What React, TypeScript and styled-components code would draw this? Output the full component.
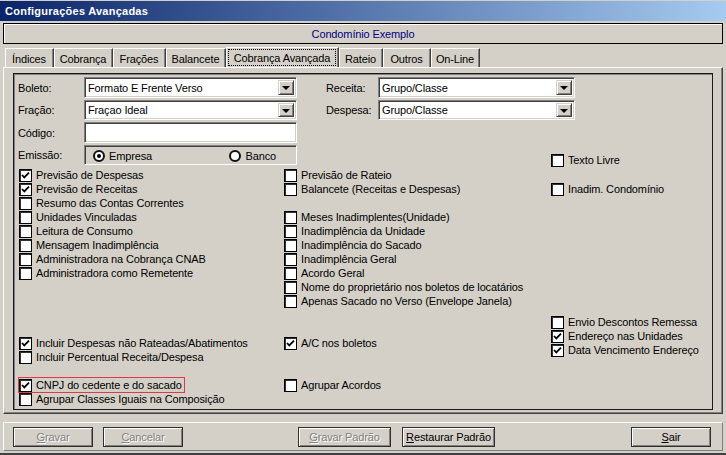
import React from 'react';
import styled, { createGlobalStyle } from 'styled-components';

const GlobalStyle = createGlobalStyle`
  html, body {
    margin: 0;
    padding: 0;
    background: #d4d0c8;
  }
  body {
    font-family: "Liberation Sans", Arial, sans-serif;
    font-size: 11px;
    letter-spacing: -0.13px;
    color: #000;
  }
`;

const Window = styled.div`
  width: 726px;
  height: 455px;
  box-sizing: border-box;
  background: #d4d0c8;
  padding-top: 1px;
  border-bottom: 2px solid #404040;
  display: flex;
  flex-direction: column;
`;

const TitleBar = styled.div`
  height: 20px;
  padding-left: 5px;
  display: flex;
  align-items: center;
  background: linear-gradient(to right, #0a246a, #a6caf0);
  color: #fff;
  font-weight: bold;
  font-size: 11px;
  letter-spacing: 0.25px;
`;

const Body = styled.div`
  padding: 0 3px;
  display: flex;
  flex-direction: column;
`;

const HeaderBox = styled.div`
  margin-top: 2px;
  height: 21px;
  box-sizing: border-box;
  border: 1px solid #000;
  box-shadow: inset 1px 1px 0 #fff;
  display: flex;
  align-items: center;
  justify-content: center;
  color: #000080;
`;

const TabStrip = styled.div`
  margin-top: 3px;
  height: 20px;
  padding-left: 2px;
  display: flex;
  align-items: flex-end;
`;

const Tab = styled.div<{ $w: number; $active?: boolean }>`
  width: ${(p) => p.$w}px;
  height: ${(p) => (p.$active ? 20 : 19)}px;
  box-sizing: border-box;
  border-left: 1px solid #fff;
  border-top: 1px solid #fff;
  border-right: 1px solid #404040;
  box-shadow: inset -1px 0 0 #808080;
  display: flex;
  align-items: center;
  justify-content: center;
  padding: 1px 2px 0 1px;
`;

const FocusText = styled.span`
  flex: 1;
  align-self: stretch;
  display: flex;
  align-items: center;
  justify-content: center;
  outline: 1px dotted #000;
  outline-offset: -1px;
  margin-bottom: 1px;
`;

const TabPage = styled.div`
  height: 347px;
  box-sizing: border-box;
  border-top: 1px solid #fff;
  border-left: 1px solid #fff;
  border-right: 1px solid #404040;
  border-bottom: 1px solid #404040;
  box-shadow: inset -1px -1px 0 #808080;
  padding: 5px 9px 3px 9px;
`;

const InnerPanel = styled.div`
  width: 700px;
  height: 337px;
  box-sizing: border-box;
  border: 1px solid #1a1a1a;
  box-shadow: inset 1px 1px 0 #808080;
  padding: 3px 0 0 4px;
`;

const FormGrid = styled.div`
  display: grid;
  grid-template-columns: 66px 213px 29px 52px 197px 1fr;
  grid-template-rows: 21px 20px 21px 20px;
  row-gap: 2px;
`;

const Label = styled.div<{ $col: number; $row: number }>`
  grid-column: ${(p) => p.$col};
  grid-row: ${(p) => p.$row};
  align-self: center;
`;

const Field = styled.div<{ $col: number; $row: number }>`
  grid-column: ${(p) => p.$col};
  grid-row: ${(p) => p.$row};
  box-sizing: border-box;
  background: #fff;
  border-top: 1px solid #808080;
  border-left: 1px solid #808080;
  border-bottom: 1px solid #fff;
  border-right: 1px solid #fff;
  box-shadow: inset 1px 1px 0 #404040, inset -1px -1px 0 #d4d0c8;
  display: flex;
  align-items: center;
  padding: 2px 2px 2px 3px;
`;

const FieldText = styled.span`
  flex: 1;
`;

const DropButton = styled.div`
  width: 16px;
  align-self: stretch;
  box-sizing: border-box;
  background: #d4d0c8;
  border-top: 1px solid #d4d0c8;
  border-left: 1px solid #d4d0c8;
  border-bottom: 1px solid #404040;
  border-right: 1px solid #404040;
  box-shadow: inset 1px 1px 0 #fff, inset -1px -1px 0 #808080;
  display: flex;
  align-items: center;
  justify-content: center;

  &::after {
    content: '';
    border-left: 4px solid transparent;
    border-right: 4px solid transparent;
    border-top: 4px solid #000;
    margin-top: 1px;
  }
`;

const RadioGroup = styled.div`
  grid-column: 2;
  grid-row: 4;
  box-sizing: border-box;
  border-top: 1px solid #808080;
  border-left: 1px solid #808080;
  border-bottom: 1px solid #fff;
  border-right: 1px solid #fff;
  box-shadow: inset 1px 1px 0 #404040;
  display: flex;
  align-items: center;
  justify-content: space-between;
  padding: 1px 20px 0 8px;
`;

const RadioItem = styled.label`
  display: flex;
  align-items: center;
  gap: 4px;
`;

const RadioDot = styled.span<{ $on?: boolean }>`
  width: 12px;
  height: 12px;
  box-sizing: border-box;
  border-radius: 50%;
  border: 2px solid #111;
  background: #fff;
  display: flex;
  align-items: center;
  justify-content: center;

  &::after {
    content: '';
    width: 4px;
    height: 4px;
    border-radius: 50%;
    background: ${(p) => (p.$on ? '#000' : 'transparent')};
  }
`;

const SideCheck = styled.div`
  grid-column: 5 / 7;
  grid-row: 4;
  align-self: end;
  margin: 0 0 -2px 173px;
`;

const CheckGrid = styled.div`
  margin-top: 3px;
  padding-left: 1px;
  display: grid;
  grid-template-columns: 265px 267px 1fr;
  grid-template-rows: repeat(17, 14px);
`;

const CheckItem = styled.div<{ $marked?: boolean }>`
  display: flex;
  align-items: center;
  gap: 4px;
  height: 14px;
  white-space: nowrap;
  padding-right: ${(p) => (p.$marked ? 2 : 0)}px;
  outline: ${(p) => (p.$marked ? '1px solid #dc3a44' : 'none')};
`;

const Cell = styled.div<{ $col: number; $row: string }>`
  grid-column: ${(p) => p.$col};
  grid-row: ${(p) => p.$row};
  display: flex;
  flex-direction: column;
  justify-content: center;
  align-items: flex-start;
`;

const Box = styled.span`
  width: 13px;
  height: 13px;
  flex: none;
  box-sizing: border-box;
  background: #fff;
  border: 1px solid #000;
  box-shadow: inset 1px 1px 0 #333;
  display: flex;
  align-items: center;
  justify-content: center;
`;

const ButtonBar = styled.div`
  margin-top: 8px;
  height: 29px;
  box-sizing: border-box;
  border-top: 1px solid #fff;
  border-left: 1px solid #fff;
  border-bottom: 1px solid #808080;
  border-right: 1px solid #808080;
  display: flex;
  align-items: flex-start;
  padding: 4px 11px 0 8px;
`;

const Button = styled.div<{ $w: number; $disabled?: boolean; $gap?: number }>`
  width: ${(p) => p.$w}px;
  height: 20px;
  margin-left: ${(p) => p.$gap ?? 0}px;
  box-sizing: border-box;
  border: 1px solid #303030;
  box-shadow: inset 1px 1px 0 #fff, inset -1px -1px 0 #808080;
  display: flex;
  align-items: center;
  justify-content: center;
  color: ${(p) => (p.$disabled ? '#808080' : '#000')};
  text-shadow: ${(p) => (p.$disabled ? '1px 1px 0 #fff' : 'none')};
`;

const Spacer = styled.div`
  flex: 1;
`;

const Check = ({ on }: { on?: boolean }) => (
  <Box>
    {on && (
      <svg width="9" height="9" viewBox="0 0 9 9">
        <path d="M1 4 L3.3 6.4 L8 1.6" fill="none" stroke="#000" strokeWidth="1.8" />
      </svg>
    )}
  </Box>
);

interface Opt {
  text: string;
  on?: boolean;
  marked?: boolean;
}

const CheckOption = ({ text, on, marked }: Opt) => (
  <CheckItem $marked={marked}>
    <Check on={on} />
    <span>{text}</span>
  </CheckItem>
);

// [coluna, linha, item]
const checks: [number, number, Opt][] = [
  [1, 1, { text: 'Previsão de Despesas', on: true }],
  [1, 2, { text: 'Previsão de Receitas', on: true }],
  [1, 3, { text: 'Resumo das Contas Correntes' }],
  [1, 4, { text: 'Unidades Vinculadas' }],
  [1, 5, { text: 'Leitura de Consumo' }],
  [1, 6, { text: 'Mensagem Inadimplência' }],
  [1, 7, { text: 'Administradora na Cobrança CNAB' }],
  [1, 8, { text: 'Administradora como Remetente' }],
  [1, 13, { text: 'Incluir Despesas não Rateadas/Abatimentos', on: true }],
  [1, 14, { text: 'Incluir Percentual Receita/Despesa' }],
  [1, 16, { text: 'CNPJ do cedente e do sacado', on: true, marked: true }],
  [1, 17, { text: 'Agrupar Classes Iguais na Composição' }],
  [2, 1, { text: 'Previsão de Rateio' }],
  [2, 2, { text: 'Balancete (Receitas e Despesas)' }],
  [2, 4, { text: 'Meses Inadimplentes(Unidade)' }],
  [2, 5, { text: 'Inadimplência da Unidade' }],
  [2, 6, { text: 'Inadimplência do Sacado' }],
  [2, 7, { text: 'Inadimplência Geral' }],
  [2, 8, { text: 'Acordo Geral' }],
  [2, 9, { text: 'Nome do proprietário nos boletos de locatários' }],
  [2, 10, { text: 'Apenas Sacado no Verso (Envelope Janela)' }],
  [2, 13, { text: 'A/C nos boletos', on: true }],
  [2, 16, { text: 'Agrupar Acordos' }],
  [3, 2, { text: 'Inadim. Condomínio' }],
];

const remessa: Opt[] = [
  { text: 'Envio Descontos Remessa' },
  { text: 'Endereço nas Unidades', on: true },
  { text: 'Data Vencimento Endereço', on: true },
];

const tabs = [
  { label: 'Índices', w: 49 },
  { label: 'Cobrança', w: 59 },
  { label: 'Frações', w: 53 },
  { label: 'Balancete', w: 60 },
  { label: 'Cobrança Avançada', w: 113, active: true },
  { label: 'Rateio', w: 44 },
  { label: 'Outros', w: 48 },
  { label: 'On-Line', w: 49 },
];

export default function App() {
  return (
    <>
      <GlobalStyle />
      <Window>
        <TitleBar>Configurações Avançadas</TitleBar>
        <Body>
          <HeaderBox>Condomínio Exemplo</HeaderBox>
          <TabStrip>
            {tabs.map((t) => (
              <Tab key={t.label} $w={t.w} $active={t.active}>
                {t.active ? <FocusText>{t.label}</FocusText> : t.label}
              </Tab>
            ))}
          </TabStrip>
          <TabPage>
            <InnerPanel>
              <FormGrid>
                <Label $col={1} $row={1}>Boleto:</Label>
                <Field $col={2} $row={1}>
                  <FieldText>Formato E Frente Verso</FieldText>
                  <DropButton />
                </Field>
                <Label $col={4} $row={1}>Receita:</Label>
                <Field $col={5} $row={1}>
                  <FieldText>Grupo/Classe</FieldText>
                  <DropButton />
                </Field>
                <Label $col={1} $row={2}>Fração:</Label>
                <Field $col={2} $row={2}>
                  <FieldText>Fraçao Ideal</FieldText>
                  <DropButton />
                </Field>
                <Label $col={4} $row={2}>Despesa:</Label>
                <Field $col={5} $row={2}>
                  <FieldText>Grupo/Classe</FieldText>
                  <DropButton />
                </Field>
                <Label $col={1} $row={3}>Código:</Label>
                <Field $col={2} $row={3} />
                <Label $col={1} $row={4}>Emissão:</Label>
                <RadioGroup>
                  <RadioItem>
                    <RadioDot $on />
                    Empresa
                  </RadioItem>
                  <RadioItem>
                    <RadioDot />
                    Banco
                  </RadioItem>
                </RadioGroup>
                <SideCheck>
                  <CheckOption text="Texto Livre" />
                </SideCheck>
              </FormGrid>
              <CheckGrid>
                {checks.map(([col, row, o]) => (
                  <Cell key={o.text} $col={col} $row={String(row)}>
                    <CheckOption {...o} />
                  </Cell>
                ))}
                <Cell $col={3} $row="11 / 15">
                  {remessa.map((o) => (
                    <CheckOption key={o.text} {...o} />
                  ))}
                </Cell>
              </CheckGrid>
            </InnerPanel>
          </TabPage>
          <ButtonBar>
            <Button $w={80} $disabled $gap={1}>
              <u>G</u>ravar
            </Button>
            <Button $w={80} $disabled $gap={10}>
              <u>C</u>ancelar
            </Button>
            <Button $w={93} $disabled $gap={115}>
              <u>G</u>ravar Padrão
            </Button>
            <Button $w={93} $gap={11}>
              <u>R</u>estaurar Padrão
            </Button>
            <Spacer />
            <Button $w={80}>
              <u>S</u>air
            </Button>
          </ButtonBar>
        </Body>
      </Window>
    </>
  );
}
